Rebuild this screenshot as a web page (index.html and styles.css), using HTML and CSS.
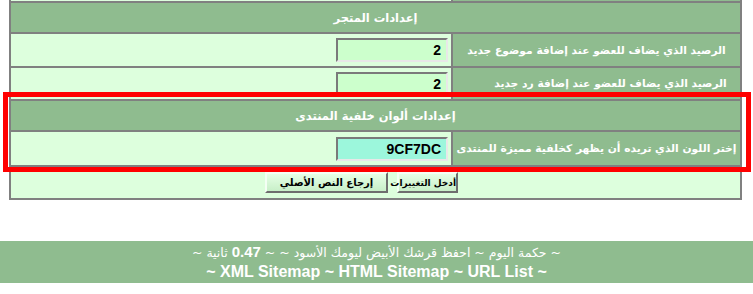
FILE: index.html
```html
<!DOCTYPE html>
<html lang="ar" dir="rtl">
<head>
    <meta charset="UTF-8">
    <title>إعدادات المنتدى</title>
    <link rel="stylesheet" href="styles.css">
</head>
<body>
    <div class="wrap">
        <table class="settings">
            <colgroup>
                <col class="col-label">
                <col>
            </colgroup>
            <tr class="cut">
                <td class="label"></td>
                <td class="field"></td>
            </tr>
            <tr>
                <th colspan="2" class="head">إعدادات المتجر</th>
            </tr>
            <tr class="row-a">
                <td class="label">الرصيد الذي يضاف للعضو عند إضافة موضوع جديد</td>
                <td class="field"><input class="box" type="text" value="2"></td>
            </tr>
            <tr class="row-b">
                <td class="label centered">الرصيد الذي يضاف للعضو عند إضافة رد جديد</td>
                <td class="field"><input class="box" type="text" value="2"></td>
            </tr>
            <tr>
                <th colspan="2" class="head">إعدادات ألوان خلفية المنتدى</th>
            </tr>
            <tr class="row-c">
                <td class="label">إختر اللون الذي تريده أن يظهر كخلفية مميزة للمنتدى</td>
                <td class="field"><input class="box color" type="text" value="9CF7DC"></td>
            </tr>
            <tr>
                <td colspan="2" class="actions">
                    <button class="btn btn-save">أدخل التغييرات</button>
                    <button class="btn btn-reset">إرجاع النص الأصلي</button>
                </td>
            </tr>
        </table>
        <!-- إطار التنبيه الأحمر -->
        <div class="highlight"></div>
    </div>

    <div class="footer">
        <div class="line">~ حكمة اليوم ~ احفظ قرشك الأبيض ليومك الأسود ~ ~ <b>0.47</b> ثانية ~</div>
        <div class="line links">~ XML Sitemap ~ HTML Sitemap ~ URL List ~</div>
    </div>
</body>
</html>
```

FILE: styles.css
```css
body {
    margin: 0;
    background-color: #fff;
    font-family: "DejaVu Sans", "Liberation Sans", sans-serif;
}
.wrap {
    position: relative;
    width: 733px;
    margin-right: 11px;
    margin-left: 9px;
}
.settings {
    width: 733px;
    table-layout: fixed;
    border-collapse: separate;
    border-spacing: 0;
    border: 1px solid #808080;
    border-top: none;
    background-color: #ddffdd;
}
.col-label {
    width: 289px;
}
.settings td,
.settings th {
    border: 1px solid #808080;
    padding: 0;
}
.cut td {
    height: 1px;
    border-top: none;
}
.head {
    height: 29px;
    background-color: #8fbc8f;
    color: #fff;
    font-size: 11.5px;
    font-weight: bold;
    text-align: center;
}
.label {
    background-color: #8fbc8f;
    color: #fff;
    font-size: 10.7px;
    font-weight: bold;
    text-align: center;
    white-space: nowrap;
    padding: 0 1px;
}
.label.centered {
    padding-left: 28px;
}
.row-a td { height: 32px; }
.row-b td { height: 31px; }
.row-c td { height: 33px; }
.field {
    padding-right: 3px !important;
}
.box {
    display: block;
    box-sizing: border-box;
    width: 112px;
    height: 24px;
    margin: 0;
    padding: 0 5px;
    border: 2px solid;
    border-color: #7a7a7a #e8e8e8 #e8e8e8 #7a7a7a;
    background-color: #ccffcc;
    font-family: "Liberation Sans", Arial, sans-serif;
    font-size: 14px;
    font-weight: bold;
    text-align: right;
    color: #000;
}
.box.color {
    background-color: #9cf7dc;
}
.actions {
    height: 31px;
    text-align: center;
    padding-right: 28px !important;
    font-size: 0;
}
.btn {
    box-sizing: border-box;
    height: 21px;
    margin: 0;
    padding: 0;
    border: 2px solid;
    border-color: #f4fff4 #6e6e6e #6e6e6e #f4fff4;
    background: linear-gradient(#e6ffe6, #c8efc8);
    font-family: "DejaVu Sans", sans-serif;
    font-size: 10px;
    font-weight: bold;
    color: #000;
    vertical-align: middle;
    white-space: nowrap;
}
.btn-save {
    width: 61px;
    margin-left: 9px;
    font-size: 9px;
}
.btn-reset {
    width: 123px;
}
.highlight {
    position: absolute;
    top: 92px;
    right: -9px;
    width: 738px;
    height: 70px;
    border: 5px solid #ff0000;
}
.footer {
    margin-top: 41px;
    padding: 2px 0 2px;
    background-color: #8fbc8f;
    color: #fff;
    text-align: center;
    font-family: "DejaVu Sans", "Liberation Sans", sans-serif;
}
.line {
    font-size: 12.5px;
    line-height: 18px;
}
.line b {
    font-family: "Liberation Sans", Arial, sans-serif;
    font-size: 15px;
}
.links {
    font-family: "Liberation Sans", Arial, sans-serif;
    font-size: 16px;
    font-weight: bold;
    line-height: 19px;
}
```
